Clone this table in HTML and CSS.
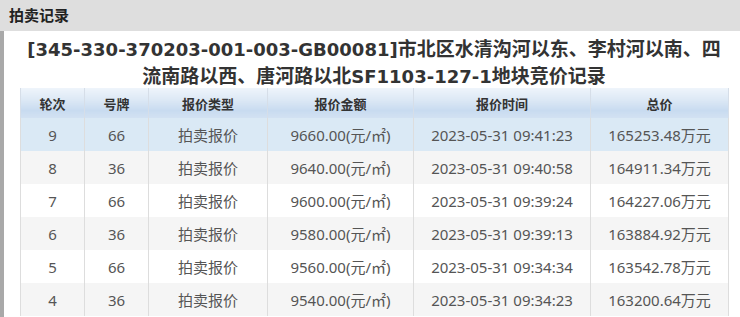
FILE: index.html
```html
<!DOCTYPE html>
<html lang="zh-CN">
<head>
<meta charset="utf-8">
<title>拍卖记录</title>
<link rel="stylesheet" href="styles.css">
</head>
<body>
<div class="bar">拍卖记录</div>
<div class="content">
  <h1 class="title"><span class="code">[345-330-370203-001-003-GB00081]</span>市北区水清沟河以东、李村河以南、四<br>流南路以西、唐河路以北<span class="code">SF1103-127-1</span>地块竞价记录</h1>
  <table class="records">
    <colgroup>
      <col class="c1"><col class="c2"><col class="c3"><col class="c4"><col class="c5"><col class="c6">
    </colgroup>
    <thead>
      <tr><th>轮次</th><th>号牌</th><th>报价类型</th><th>报价金额</th><th>报价时间</th><th>总价</th></tr>
    </thead>
    <tbody>
      <tr class="active"><td>9</td><td>66</td><td>拍卖报价</td><td>9660.00(元/㎡)</td><td>2023-05-31 09:41:23</td><td>165253.48万元</td></tr>
      <tr class="odd"><td>8</td><td>36</td><td>拍卖报价</td><td>9640.00(元/㎡)</td><td>2023-05-31 09:40:58</td><td>164911.34万元</td></tr>
      <tr><td>7</td><td>66</td><td>拍卖报价</td><td>9600.00(元/㎡)</td><td>2023-05-31 09:39:24</td><td>164227.06万元</td></tr>
      <tr class="odd"><td>6</td><td>36</td><td>拍卖报价</td><td>9580.00(元/㎡)</td><td>2023-05-31 09:39:13</td><td>163884.92万元</td></tr>
      <tr><td>5</td><td>66</td><td>拍卖报价</td><td>9560.00(元/㎡)</td><td>2023-05-31 09:34:34</td><td>163542.78万元</td></tr>
      <tr class="odd"><td>4</td><td>36</td><td>拍卖报价</td><td>9540.00(元/㎡)</td><td>2023-05-31 09:34:23</td><td>163200.64万元</td></tr>
    </tbody>
  </table>
</div>
</body>
</html>
```
FILE: styles.css
```css
html, body {
  margin: 0;
  padding: 0;
  background: #fff;
  font-family: "Noto Sans", "Noto Sans CJK SC", sans-serif;
  overflow: hidden;
}
.bar {
  height: 31px;
  line-height: 30px;
  background: #dedede;
  padding-left: 9px;
  font-family: "Noto Sans CJK SC", sans-serif;
  font-weight: bold;
  font-size: 15px;
  color: #222;
}
.content {
  border-left: 4px solid #a9a9a9;
  padding: 3px 12px 0 16px;
  min-height: 283px;
}
.title {
  margin: 0;
  height: 54px;
  text-align: center;
  font-family: "Noto Sans CJK SC", sans-serif;
  font-size: 19px;
  line-height: 27px;
  font-weight: bold;
  color: #333;
  overflow: hidden;
}
.title .code {
  font-family: "DejaVu Sans", "Noto Sans", sans-serif;
  font-size: 18px;
  line-height: 1;
}
.records {
  width: 708px;
  border-collapse: collapse;
  table-layout: fixed;
  font-size: 15px;
  color: #555;
}
.c1 { width: 64px; }
.c2 { width: 64px; }
.c3 { width: 119px; }
.c4 { width: 146px; }
.c5 { width: 177px; }
.c6 { width: 138px; }
.records th {
  height: 30px;
  padding: 0;
  font-size: 13px;
  font-weight: bold;
  color: #333;
  font-family: "Noto Sans CJK SC", sans-serif;
  background: linear-gradient(#eef4fb 0%, #dce8f5 40%, #c8dbf0 75%, #d2e1f2 100%);
  border-left: 1px solid #d6dee8;
  border-right: 1px solid #d6dee8;
}
.records td {
  height: 33px;
  padding: 0;
  text-align: center;
  border-left: 1px solid #dddddd;
  border-right: 1px solid #dddddd;
  white-space: nowrap;
}
.records tr.odd td { background: #f5f5f5; }
.records tr.active td { background: #dae9f5; }
```
